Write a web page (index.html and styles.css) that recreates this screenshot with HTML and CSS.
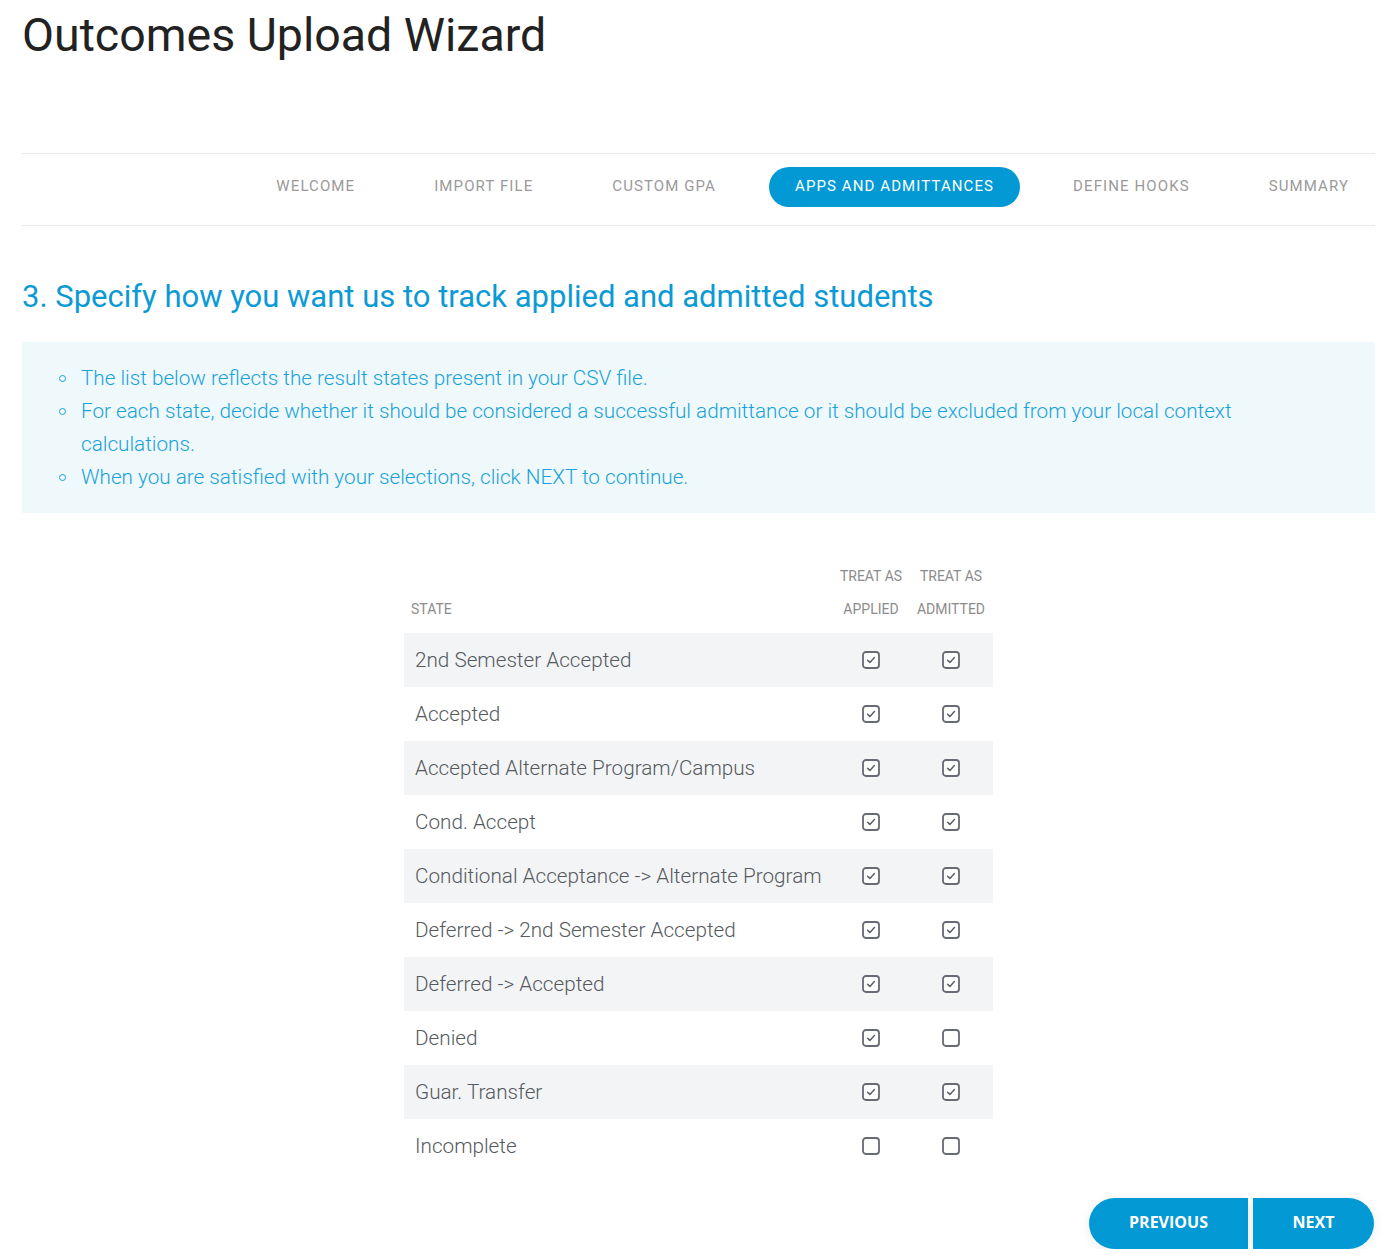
FILE: index.html
```html
<!DOCTYPE html>
<html>
<head>
<meta charset="utf-8">
<link rel="stylesheet" href="styles.css">
</head>
<body>
<div class="page">
  <h1 class="title">Outcomes Upload Wizard</h1>
  <nav class="steps">
    <span class="step">WELCOME</span>
    <span class="step">IMPORT FILE</span>
    <span class="step">CUSTOM GPA</span>
    <span class="step active">APPS AND ADMITTANCES</span>
    <span class="step">DEFINE HOOKS</span>
    <span class="step">SUMMARY</span>
  </nav>
  <h2 class="heading">3. Specify how you want us to track applied and admitted students</h2>
  <div class="info">
    <ul class="info-list">
      <li>The list below reflects the result states present in your CSV file.</li>
      <li>For each state, decide whether it should be considered a successful admittance or it should be excluded from your local context calculations.</li>
      <li>When you are satisfied with your selections, click NEXT to continue.</li>
    </ul>
  </div>
  <div class="table-wrap">
    <table class="states">
      <thead>
        <tr>
          <th class="th-state">STATE</th>
          <th class="th-check">TREAT AS<br>APPLIED</th>
          <th class="th-check">TREAT AS<br>ADMITTED</th>
        </tr>
      </thead>
      <tbody id="rows"></tbody>
    </table>
  </div>
  <div class="actions">
    <button class="btn btn-prev">PREVIOUS</button>
    <button class="btn btn-next">NEXT</button>
  </div>
</div>
<script>
const data = [
  ["2nd Semester Accepted",1,1],
  ["Accepted",1,1],
  ["Accepted Alternate Program/Campus",1,1],
  ["Cond. Accept",1,1],
  ["Conditional Acceptance -> Alternate Program",1,1],
  ["Deferred -> 2nd Semester Accepted",1,1],
  ["Deferred -> Accepted",1,1],
  ["Denied",1,0],
  ["Guar. Transfer",1,1],
  ["Incomplete",0,0]
];
const on = '<svg class="cb" width="18" height="18" viewBox="0 0 18 18"><rect x="1" y="1" width="16" height="16" rx="3" fill="#fff" stroke="#676a74" stroke-width="1.8"/><path d="M5.6 9.3 L7.9 11.4 L12.4 6.6" fill="none" stroke="#5b5e68" stroke-width="1.5" stroke-linecap="round" stroke-linejoin="round"/></svg>';
const off = '<svg class="cb" width="18" height="18" viewBox="0 0 18 18"><rect x="1" y="1" width="16" height="16" rx="3" fill="#fff" stroke="#676a74" stroke-width="1.8"/></svg>';
const tb = document.getElementById('rows');
tb.innerHTML = data.map(r => {
  const name = r[0].replace(/&/g,'&amp;').replace(/</g,'&lt;').replace(/>/g,'&gt;');
  return '<tr><td class="td-state">' + name + '</td><td class="td-check">' + (r[1]?on:off) + '</td><td class="td-check">' + (r[2]?on:off) + '</td></tr>';
}).join('');
</script>
</body>
</html>
```

FILE: styles.css
```css
html, body {
  margin: 0;
  padding: 0;
  background: #fff;
}
body {
  font-family: Roboto, "Liberation Sans", sans-serif;
}
.page {
  padding: 7px 23px 0 22px;
}
.title {
  margin: 0;
  font-size: 46.5px;
  font-weight: 400;
  line-height: 56px;
  color: #222;
}
.steps {
  margin-top: 90px;
  border-top: 1px solid #e8e8e8;
  border-bottom: 1px solid #e8e8e8;
  display: flex;
  justify-content: flex-end;
  align-items: center;
  gap: 27px;
  height: 71px;
}
.step {
  padding: 0 26px;
  height: 40px;
  line-height: 38px;
  font-size: 15px;
  letter-spacing: 1.1px;
  color: #9a9a9a;
  border-radius: 20px;
  margin-top: -5px;
}
.step.active {
  background: #0299d4;
  color: #fff;
}
.heading {
  margin: 51px 0 0 0;
  font-size: 31px;
  font-weight: 400;
  line-height: 40px;
  color: #0b9ad4;
}
.info {
  margin-top: 25px;
  background: #eff8fb;
  padding: 20px 0 19px 0;
}
.info-list {
  margin: 0;
  padding: 0 100px 0 37px;
  list-style: none;
}
.info-list li {
  position: relative;
  padding-left: 22px;
  font-size: 20.7px;
  font-weight: 300;
  line-height: 33px;
  color: #19a2d9;
}
.info-list li::before {
  content: "";
  position: absolute;
  left: 0;
  top: 13px;
  width: 5px;
  height: 5px;
  border: 1.5px solid #19a2d9;
  border-radius: 50%;
}
.table-wrap {
  margin-top: 47px;
  display: flex;
  justify-content: flex-start;
  padding-left: 382px;
}
.states {
  border-collapse: collapse;
  width: 589px;
}
.states th {
  font-size: 14px;
  font-weight: 400;
  color: #8c8c8c;
  line-height: 33px;
  padding: 0 0 7px 0;
  vertical-align: bottom;
}
.th-state {
  text-align: left;
  padding-left: 7px !important;
}
.th-check {
  width: 76px;
  text-align: center;
  padding-right: 4px !important;
  white-space: nowrap;
}
.states tbody tr {
  height: 54px;
}
.states tbody tr:nth-child(odd) {
  background: #f3f4f6;
}
.td-state {
  padding: 0 0 0 11px;
  font-size: 20.7px;
  font-weight: 300;
  color: #555a60;
}
.td-check {
  text-align: center;
  vertical-align: middle;
  padding: 0 4px 0 0;
}
.cb {
  display: block;
  margin: 0 auto;
}
.actions {
  margin-top: 25px;
  display: flex;
  justify-content: flex-end;
  gap: 5px;
  padding-right: 1px;
}
.btn {
  border: none;
  background: #0299d4;
  color: #fff;
  font-family: "Open Sans", "Liberation Sans", sans-serif;
  font-weight: 700;
  font-size: 16px;
  height: 51px;
  padding: 0 0 3px 0;
  box-shadow: 0 2px 12px rgba(0,0,0,0.08);
  cursor: pointer;
}
.btn-prev {
  border-radius: 26px 0 0 26px;
  width: 159px;
}
.btn-next {
  border-radius: 0 26px 26px 0;
  width: 121px;
}
```
